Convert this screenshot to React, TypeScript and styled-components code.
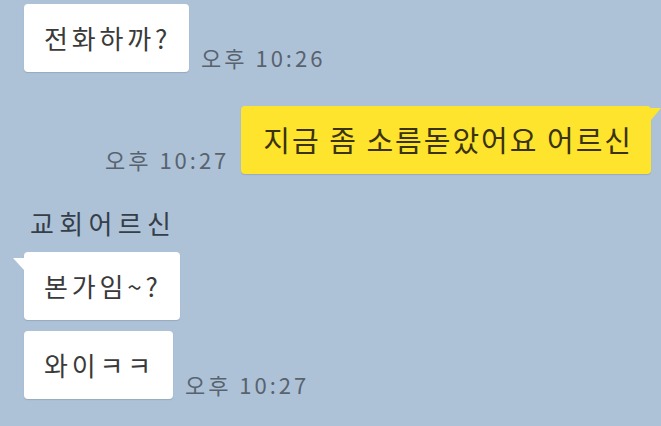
import React from "react";
import styled, { createGlobalStyle, css } from "styled-components";

const Global = createGlobalStyle`
  html, body { margin: 0; padding: 0; }
  body {
    background: #aec2d7;
    font-family: "Noto Sans CJK KR", "Noto Sans", sans-serif;
  }
`;

const Screen = styled.div`
  width: 661px;
  height: 426px;
  box-sizing: border-box;
  background: #aec2d7;
  padding: 4px 10px 0 24px;
  display: flex;
  flex-direction: column;
  overflow: hidden;
`;

const Row = styled.div<{ $mine?: boolean; $top?: number }>`
  display: flex;
  align-items: flex-end;
  justify-content: ${(p) => (p.$mine ? "flex-end" : "flex-start")};
  gap: 12px;
  margin-top: ${(p) => p.$top ?? 0}px;
`;

const Bubble = styled.div<{ $mine?: boolean; $tail?: boolean }>`
  position: relative;
  height: 68px;
  box-sizing: border-box;
  display: flex;
  align-items: center;
  padding: 0 18px 2px 20px;
  border-radius: 4px;
  background: #ffffff;
  color: #3a3a3a;
  font-size: 26px;
  letter-spacing: 3.8px;
  box-shadow: 0 1px 1px rgba(80, 100, 120, 0.25);
  white-space: nowrap;
  ${(p) =>
    p.$mine &&
    css`
      background: #fee42c;
      color: #3a3310;
      font-size: 29px;
      letter-spacing: 2px;
      padding: 0 18px 2px 22px;
    `}
  ${(p) =>
    p.$tail &&
    !p.$mine &&
    css`
      &::before {
        content: "";
        position: absolute;
        left: -11px;
        top: 6px;
        border-right: 11px solid #ffffff;
        border-bottom: 12px solid transparent;
      }
    `}
  ${(p) =>
    p.$tail &&
    p.$mine &&
    css`
      &::after {
        content: "";
        position: absolute;
        right: -10px;
        top: 2px;
        border-left: 10px solid #fee42c;
        border-bottom: 12px solid transparent;
      }
    `}
`;

const Time = styled.span`
  font-size: 22px;
  letter-spacing: 3px;
  color: #58636f;
  line-height: 1;
  padding-bottom: 4px;
  white-space: nowrap;
`;

const Name = styled.div`
  margin: 34px 0 0 6px;
  font-size: 26px;
  letter-spacing: 5.3px;
  color: #353e49;
  line-height: 30px;
`;

export default function App() {
  return (
    <>
      <Global />
      <Screen>
        <Row>
          <Bubble>전화하까?</Bubble>
          <Time>오후 10:26</Time>
        </Row>
        <Row $mine $top={34}>
          <Time>오후 10:27</Time>
          <Bubble $mine $tail>
            지금 좀 소름돋았어요 어르신
          </Bubble>
        </Row>
        <Name>교회어르신</Name>
        <Row $top={14}>
          <Bubble $tail>본가임~?</Bubble>
        </Row>
        <Row $top={11}>
          <Bubble>와이ㅋㅋ</Bubble>
          <Time>오후 10:27</Time>
        </Row>
      </Screen>
    </>
  );
}
